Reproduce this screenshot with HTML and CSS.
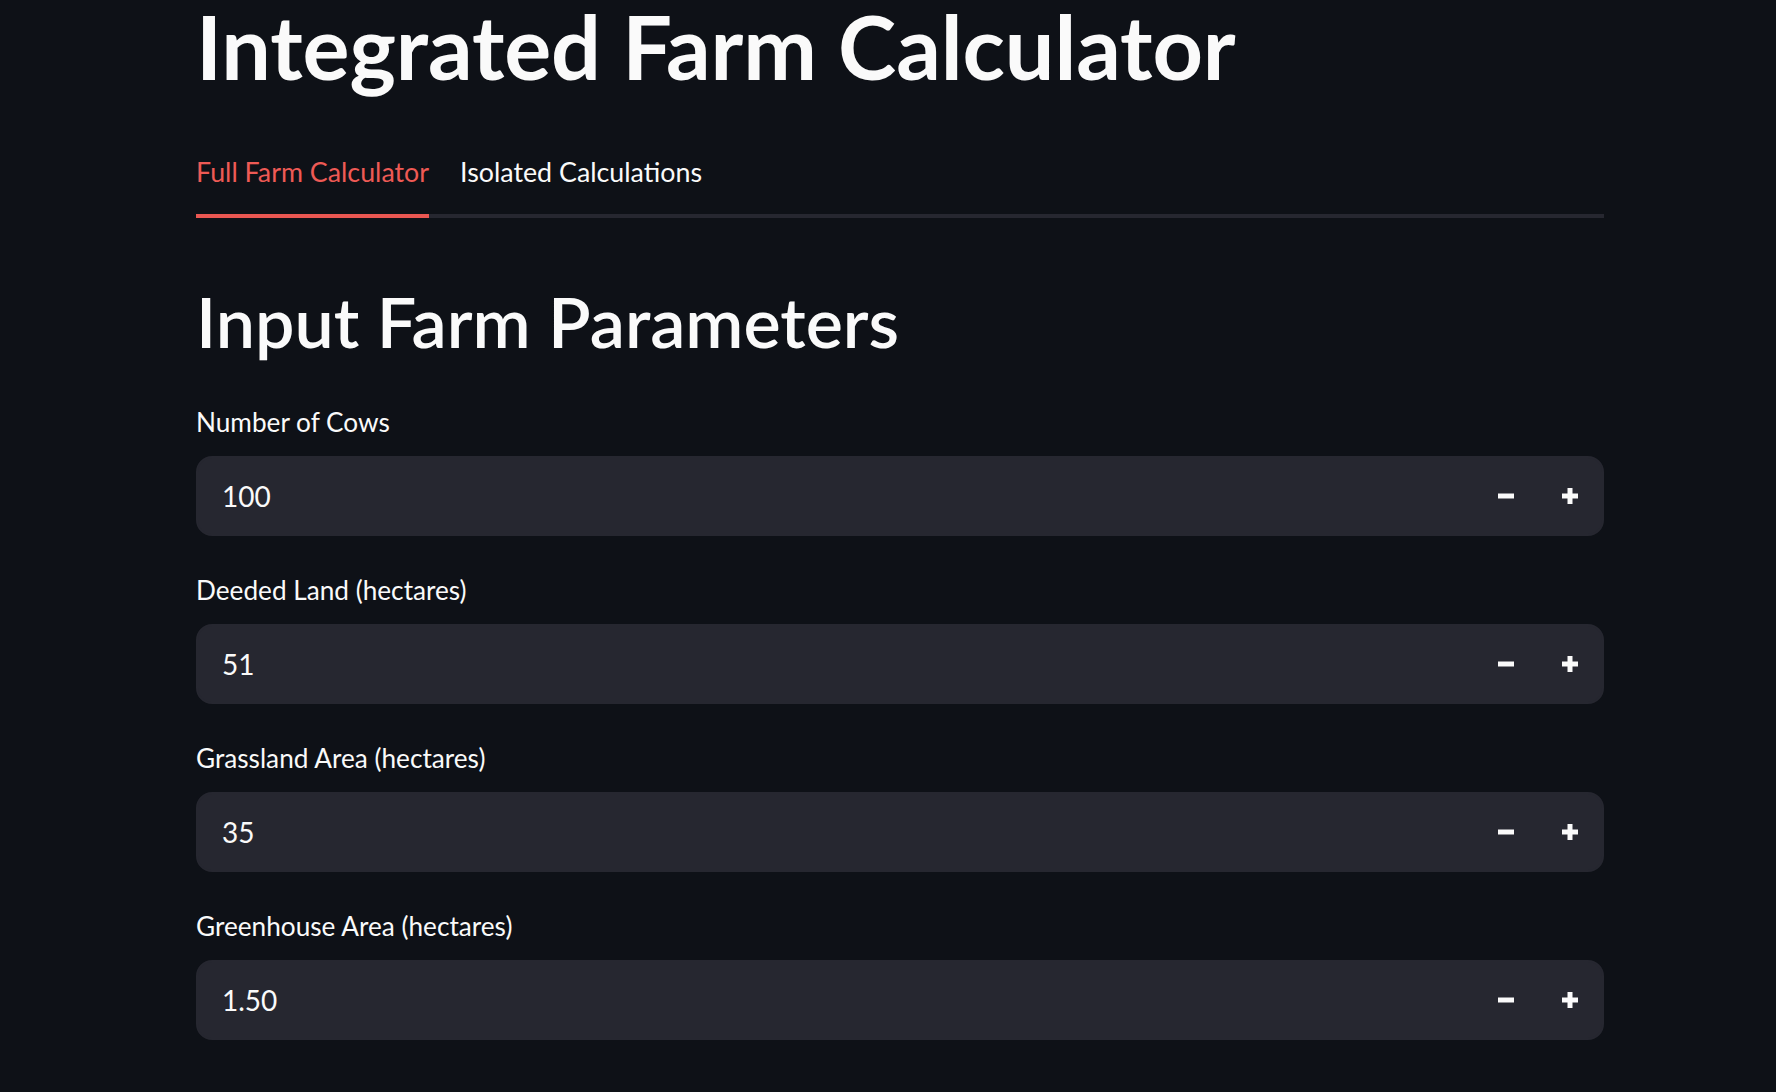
FILE: index.html
```html
<!DOCTYPE html>
<html lang="en">
<head>
<meta charset="utf-8">
<title>Integrated Farm Calculator</title>
<link rel="stylesheet" href="styles.css">
</head>
<body>
<main class="main">
  <h1 class="title">Integrated Farm Calculator</h1>
  <div class="tablist">
    <div class="tab active">Full Farm Calculator</div>
    <div class="tab">Isolated Calculations</div>
  </div>
  <h2 class="subtitle">Input Farm Parameters</h2>
  <div class="fields">
    <div class="field">
      <label class="label">Number of Cows</label>
      <div class="numinput">
        <span class="value">100</span>
        <button class="step"><svg width="16" height="16" viewBox="0 0 16 16"><rect x="0" y="5.5" width="16" height="5" fill="#fafafa"/></svg></button>
        <button class="step"><svg width="16" height="16" viewBox="0 0 16 16"><rect x="0" y="5.5" width="16" height="5" fill="#fafafa"/><rect x="5.5" y="0" width="5" height="16" fill="#fafafa"/></svg></button>
      </div>
    </div>
    <div class="field">
      <label class="label">Deeded Land (hectares)</label>
      <div class="numinput">
        <span class="value">51</span>
        <button class="step"><svg width="16" height="16" viewBox="0 0 16 16"><rect x="0" y="5.5" width="16" height="5" fill="#fafafa"/></svg></button>
        <button class="step"><svg width="16" height="16" viewBox="0 0 16 16"><rect x="0" y="5.5" width="16" height="5" fill="#fafafa"/><rect x="5.5" y="0" width="5" height="16" fill="#fafafa"/></svg></button>
      </div>
    </div>
    <div class="field">
      <label class="label">Grassland Area (hectares)</label>
      <div class="numinput">
        <span class="value">35</span>
        <button class="step"><svg width="16" height="16" viewBox="0 0 16 16"><rect x="0" y="5.5" width="16" height="5" fill="#fafafa"/></svg></button>
        <button class="step"><svg width="16" height="16" viewBox="0 0 16 16"><rect x="0" y="5.5" width="16" height="5" fill="#fafafa"/><rect x="5.5" y="0" width="5" height="16" fill="#fafafa"/></svg></button>
      </div>
    </div>
    <div class="field">
      <label class="label">Greenhouse Area (hectares)</label>
      <div class="numinput">
        <span class="value">1.50</span>
        <button class="step"><svg width="16" height="16" viewBox="0 0 16 16"><rect x="0" y="5.5" width="16" height="5" fill="#fafafa"/></svg></button>
        <button class="step"><svg width="16" height="16" viewBox="0 0 16 16"><rect x="0" y="5.5" width="16" height="5" fill="#fafafa"/><rect x="5.5" y="0" width="5" height="16" fill="#fafafa"/></svg></button>
      </div>
    </div>
  </div>
</main>
</body>
</html>
```
FILE: styles.css
```css
html, body {
  margin: 0;
  padding: 0;
  background: #0e1117;
  color: #fafafa;
  font-family: Lato, "Noto Sans", sans-serif;
  overflow: hidden;
}

.main {
  padding: 0 172px 0 196px;
  height: 1092px;
  box-sizing: border-box;
}

.title {
  margin: 0;
  padding-top: 0;
  font-size: 88px;
  line-height: 92px;
  font-weight: 700;
  letter-spacing: -0.1px;
}

.tablist {
  display: flex;
  gap: 31px;
  margin-top: 60px;
  border-bottom: 4px solid #262730;
}

.tab {
  font-size: 26.8px;
  line-height: 40px;
  padding-bottom: 22px;
  border-bottom: 4px solid transparent;
  margin-bottom: -4px;
  color: #fafafa;
}

.tab.active {
  color: #ee5a55;
  border-bottom-color: #ea5752;
}

.subtitle {
  margin: 61px 0 0;
  font-size: 70px;
  line-height: 84px;
  font-weight: 600;
}

.fields {
  display: flex;
  flex-direction: column;
  gap: 32px;
  margin-top: 37px;
}

.field {
  display: flex;
  flex-direction: column;
}

.label {
  display: flex;
  align-items: flex-start;
  min-height: 48px;
  margin-bottom: 8px;
  font-size: 26.2px;
  line-height: 44px;
}

.numinput {
  display: flex;
  align-items: center;
  height: 80px;
  box-sizing: border-box;
  border: 2px solid #262730;
  border-radius: 16px;
  background: #262730;
  padding-left: 24px;
}

.value {
  flex: 1;
  font-size: 28px;
  line-height: 36px;
}

.step {
  width: 64px;
  height: 76px;
  display: flex;
  align-items: center;
  justify-content: center;
  padding: 0;
  border: 0;
  background: transparent;
}

.step svg {
  display: block;
}
```
